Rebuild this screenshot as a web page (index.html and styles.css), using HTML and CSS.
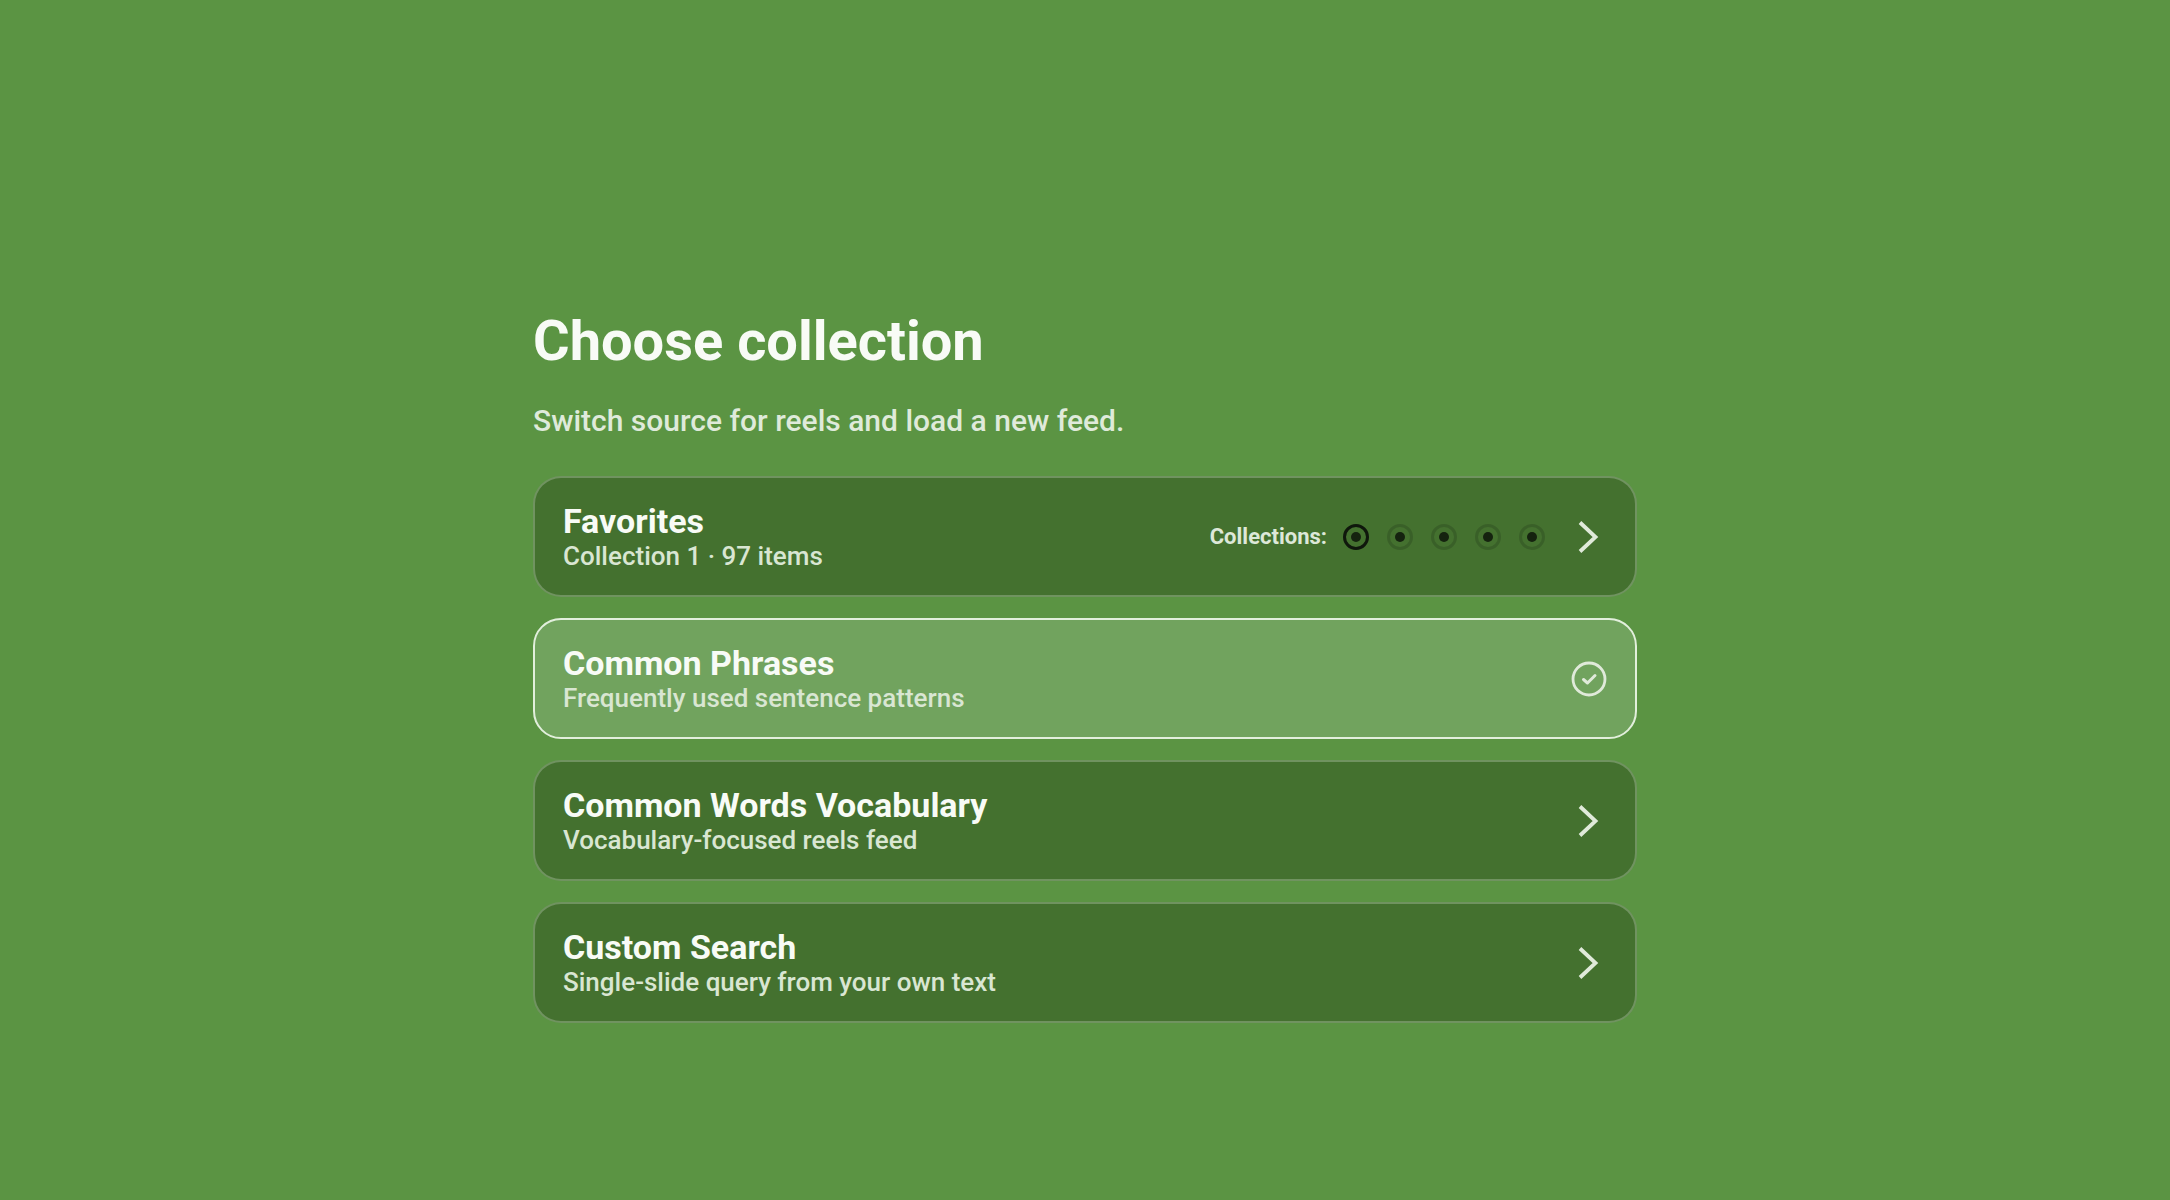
FILE: index.html
```html
<!DOCTYPE html>
<html lang="en">
<head>
<meta charset="utf-8">
<title>Choose collection</title>
<link rel="stylesheet" href="styles.css">
</head>
<body>
<main class="page">
  <h1 class="title">Choose collection</h1>
  <p class="lead">Switch source for reels and load a new feed.</p>
  <div class="list">
    <div class="card">
      <div class="card-text">
        <div class="card-title">Favorites</div>
        <div class="card-sub">Collection 1 · 97 items</div>
      </div>
      <div class="picker">
        <span class="picker-label">Collections:</span>
        <div class="dots">
          <span class="dot dot-on"></span>
          <span class="dot"></span>
          <span class="dot"></span>
          <span class="dot"></span>
          <span class="dot"></span>
        </div>
      </div>
      <svg class="icon" viewBox="0 0 36 36"><path d="M9 3.5 L24.5 18 L9 32.5" fill="none" stroke="currentColor" stroke-width="3.8" stroke-linejoin="miter"/></svg>
    </div>
    <div class="card card-selected">
      <div class="card-text">
        <div class="card-title">Common Phrases</div>
        <div class="card-sub">Frequently used sentence patterns</div>
      </div>
      <svg class="icon" viewBox="0 0 36 36"><circle cx="18" cy="18" r="16" fill="none" stroke="currentColor" stroke-width="2.8"/><path d="M12.5 18.5 L16.5 22 L24 14.5" fill="none" stroke="currentColor" stroke-width="3" stroke-linecap="round" stroke-linejoin="round"/></svg>
    </div>
    <div class="card">
      <div class="card-text">
        <div class="card-title">Common Words Vocabulary</div>
        <div class="card-sub">Vocabulary-focused reels feed</div>
      </div>
      <svg class="icon" viewBox="0 0 36 36"><path d="M9 3.5 L24.5 18 L9 32.5" fill="none" stroke="currentColor" stroke-width="3.8" stroke-linejoin="miter"/></svg>
    </div>
    <div class="card">
      <div class="card-text">
        <div class="card-title">Custom Search</div>
        <div class="card-sub">Single-slide query from your own text</div>
      </div>
      <svg class="icon" viewBox="0 0 36 36"><path d="M9 3.5 L24.5 18 L9 32.5" fill="none" stroke="currentColor" stroke-width="3.8" stroke-linejoin="miter"/></svg>
    </div>
  </div>
</main>
</body>
</html>
```
FILE: styles.css
```css
* { box-sizing: border-box; }
html, body {
  margin: 0;
  padding: 0;
  background: #5b9443;
  font-family: Roboto, "Liberation Sans", Arial, sans-serif;
  color: #f8fbf6;
}
body { min-height: 1200px; }
.page {
  width: 1104px;
  margin: 0 auto;
  padding-top: 308px;
}
.title {
  margin: 0;
  font-size: 56px;
  line-height: 1.2;
  font-weight: 700;
  color: #f8fbf6;
}
.lead {
  margin: 28px 0 0;
  font-size: 30px;
  line-height: 1.2;
  font-weight: 500;
  color: #dfeada;
}
.list {
  margin-top: 37px;
  display: flex;
  flex-direction: column;
  gap: 21px;
}
.card {
  display: flex;
  align-items: center;
  height: 121px;
  padding: 0 28px;
  border: 2px solid rgba(255, 255, 255, 0.24);
  border-radius: 28px;
  background: #44712f;
}
.card-selected {
  background: #71a35e;
  border-color: #e2efdc;
}
.card-text {
  flex: 1;
  min-width: 0;
}
.card-title {
  font-size: 34px;
  line-height: 40.8px;
  font-weight: 700;
  color: #f8fbf6;
}
.card-sub {
  font-size: 26px;
  line-height: 31.2px;
  font-weight: 500;
  color: #d9e6d2;
}
.picker {
  display: flex;
  align-items: center;
  gap: 16px;
  margin-right: 26px;
}
.picker-label {
  font-size: 22px;
  font-weight: 700;
  color: #dde8d8;
}
.dots {
  display: flex;
  align-items: center;
  gap: 18px;
}
.dot {
  width: 26px;
  height: 26px;
  border-radius: 50%;
  border: 3px solid rgba(0, 0, 0, 0.15);
  display: flex;
  align-items: center;
  justify-content: center;
}
.dot::after {
  content: "";
  width: 10px;
  height: 10px;
  border-radius: 50%;
  background: #15230f;
}
.dot-on {
  border-color: #0f170c;
}
.icon {
  width: 36px;
  height: 36px;
  flex: none;
  color: #e0eada;
}
```
